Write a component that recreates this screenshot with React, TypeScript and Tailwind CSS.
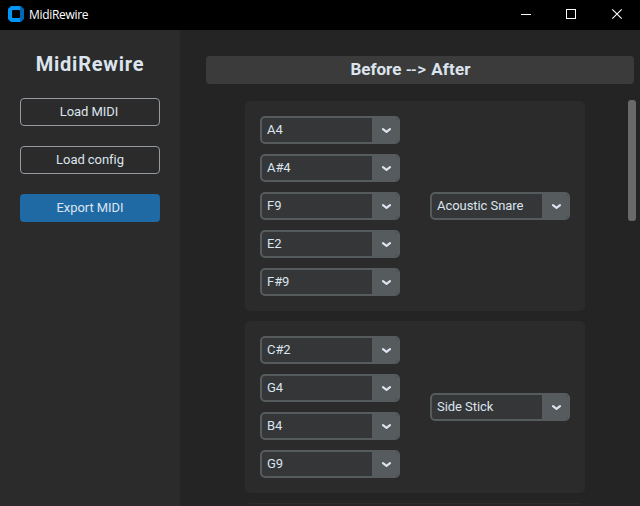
import React from "react";

function Combo({ value }: { value: string }) {
  return (
    <div className="flex h-7 w-[140px] shrink-0 overflow-hidden rounded-[5px] border-2 border-[#565b5e] bg-[#343638]">
      <span className="flex-1 pl-[5px] text-[13px] leading-[23px] tracking-[-0.06px] whitespace-nowrap">{value}</span>
      <span className="flex w-[26px] items-center justify-center bg-[#565b5e] pl-[3px]">
        <svg className="mt-px h-[7px] w-[11px]" viewBox="0 0 11 7" fill="none" stroke="#dce4ee" strokeWidth="2.2" strokeLinecap="round" strokeLinejoin="round">
          <path d="M2 2.2 L5.5 4.8 L9 2.2" />
        </svg>
      </span>
    </div>
  );
}

function MappingCard({ notes, target }: { notes: string[]; target: string }) {
  return (
    <section className="flex w-[340px] shrink-0 items-center gap-[30px] rounded-[5px] bg-[#2b2b2b] p-[15px]">
      <div className="flex flex-col gap-[10px]">
        {notes.map((note) => (
          <Combo key={note} value={note} />
        ))}
      </div>
      <Combo value={target} />
    </section>
  );
}

function TitleBar() {
  return (
    <header className="flex h-[30px] shrink-0 items-center bg-black pl-2 text-white">
      <svg className="mb-[2px] h-4 w-4" viewBox="0 0 16 16">
        <path d="M3 0H12L13 1V15L12 16H3L0 13V3Z" fill="#0096fa" />
        <path d="M12 0H13L16 3V13L13 16H12Z" fill="#0067b5" />
        <rect x="4" y="4" width="8" height="8" rx="1" fill="#000" />
      </svg>
      <span className="ml-[5px] font-['Open_Sans',sans-serif] text-[12px] leading-4 tracking-[-0.3px]">MidiRewire</span>
      <svg className="ml-auto h-[30px] w-[138px]" viewBox="0 0 138 30" fill="none" stroke="#fff">
        <path d="M19 14.5H29" />
        <rect x="64.5" y="9.5" width="9" height="9" />
        <path d="M110.3 9.3L119.7 18.7M119.7 9.3L110.3 18.7" strokeWidth="1.1" />
      </svg>
    </header>
  );
}

export default function App() {
  return (
    <div className="flex h-[506px] w-[640px] flex-col overflow-hidden bg-[#242424] font-[Roboto,sans-serif] text-[#dce4ee]">
      <TitleBar />
      <div className="flex min-h-0 flex-1">
        <aside className="flex w-[180px] shrink-0 flex-col items-center bg-[#2b2b2b] pt-5">
          <h1 className="h-7 text-[20px] leading-7 font-bold tracking-[0.75px]">MidiRewire</h1>
          <nav className="mt-5 flex flex-col gap-5 text-[13px] tracking-[-0.06px]">
            <button className="h-7 w-[140px] rounded-[4px] border border-[#949a9f] pr-[2px] leading-[26px]">Load MIDI</button>
            <button className="h-7 w-[140px] rounded-[4px] border border-[#949a9f] leading-[26px]">Load config</button>
            <button className="h-7 w-[140px] rounded-[4px] bg-[#1f6aa5] leading-7">Export MIDI</button>
          </nav>
        </aside>
        <main className="flex min-w-0 flex-1 flex-col pt-[26px]">
          <h2 className="mr-[6px] ml-[26px] flex h-7 shrink-0 justify-center rounded-[4px] bg-[#3b3b3b] pr-[19px] text-[17px] leading-[27px] font-bold">
            <span>Before</span>
            <span className="ml-[5px] inline-block w-[11px] origin-left scale-x-[0.95] font-medium tracking-[-0.5px] whitespace-nowrap">--</span>
            <span className="mr-[5px] font-medium">&gt;</span>
            <span className="tracking-[0.15px]">After</span>
          </h2>
          <div className="mt-4 mb-[2px] flex min-h-0 flex-1 justify-between overflow-hidden pr-1 pl-[65px]">
            <div className="flex flex-col gap-[10px] pt-px">
              <MappingCard notes={["A4", "A#4", "F9", "E2", "F#9"]} target="Acoustic Snare" />
              <MappingCard notes={["C#2", "G4", "B4", "G9"]} target="Side Stick" />
              <section className="h-10 w-[340px] shrink-0 rounded-[5px] bg-[#2b2b2b]" />
            </div>
            <div className="h-[121px] w-2 rounded-[3px] bg-[#696969]" />
          </div>
        </main>
      </div>
    </div>
  );
}
